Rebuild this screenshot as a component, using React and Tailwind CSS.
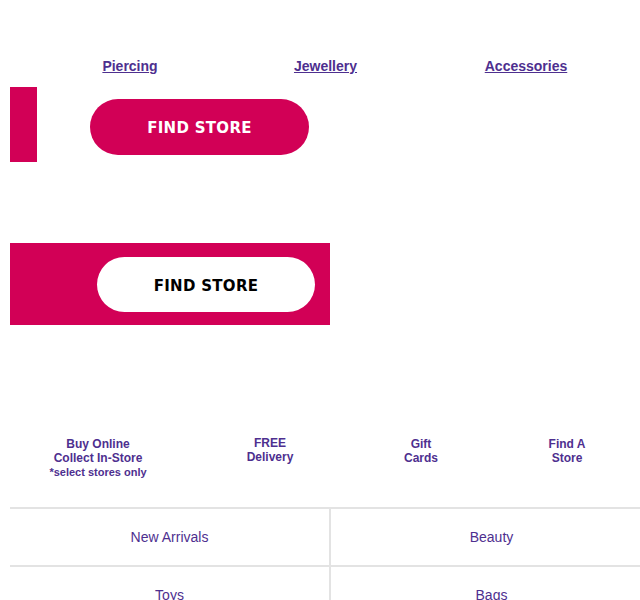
export default function App() {
  const purple = "text-[#4e2f8f]";
  return (
    <div className="w-[640px] h-[600px] overflow-hidden bg-white font-['Liberation_Sans',Arial,sans-serif]">
      {/* Links */}
      <div className="pt-[55px] pl-[10px]">
        <div className="grid grid-cols-[240px_151px_250px] h-[22px] items-center text-[14px] font-bold leading-[22px]">
          <a className={`text-center underline ${purple}`}>Piercing</a>
          <a className={`text-center underline ${purple}`}>Jewellery</a>
          <a className={`text-center underline ${purple}`}>Accessories</a>
        </div>
      </div>
      {/* Bar + button */}
      <div className="flex pl-[10px] mt-[10px]">
        <div className="w-[27px] h-[75px] bg-[#d20056]" />
        <div className="ml-[53px] mt-[12px] w-[219px] h-[56px] pt-[2px] rounded-full bg-[#d20056] flex items-center justify-center text-white font-['DejaVu_Sans',sans-serif] font-bold text-[15px] tracking-[0.3px]">
          FIND STORE
        </div>
      </div>
      {/* Pink block */}
      <div className="pl-[10px] mt-[81px]">
        <div className="w-[320px] h-[82px] bg-[#d20056] pl-[87px] pt-[14px]">
          <div className="w-[218px] h-[55px] pt-[3px] rounded-full bg-white flex items-center justify-center text-black font-['DejaVu_Sans',sans-serif] font-bold text-[15px] tracking-[0.3px]">
            FIND STORE
          </div>
        </div>
      </div>
      {/* Features */}
      <div className="pl-[10px] mt-[112px]">
        <div className={`grid grid-cols-[176px_168px_134px_158px] items-start text-center font-bold text-[12px] leading-[14px] ${purple}`}>
          <div>
            <div>Buy Online</div>
            <div>Collect In-Store</div>
            <div className="text-[11px]">*select stores only</div>
          </div>
          <div className="-mt-[1px]">
            <div>FREE</div>
            <div>Delivery</div>
          </div>
          <div>
            <div>Gift</div>
            <div>Cards</div>
          </div>
          <div>
            <div>Find A</div>
            <div>Store</div>
          </div>
        </div>
      </div>
      {/* Category grid */}
      <div className="pl-[10px] mt-[28px]">
        <div className={`w-[642px] grid grid-cols-[321px_321px] text-[14px] ${purple}`}>
          <div className="h-[58px] border-t-2 border-r-2 border-[#e3e3e3] flex items-center justify-center">New Arrivals</div>
          <div className="h-[58px] border-t-2 border-[#e3e3e3] flex items-center justify-center">Beauty</div>
          <div className="h-[58px] border-t-2 border-r-2 border-[#e3e3e3] flex items-center justify-center">Toys</div>
          <div className="h-[58px] border-t-2 border-[#e3e3e3] flex items-center justify-center">Bags</div>
        </div>
      </div>
    </div>
  );
}
